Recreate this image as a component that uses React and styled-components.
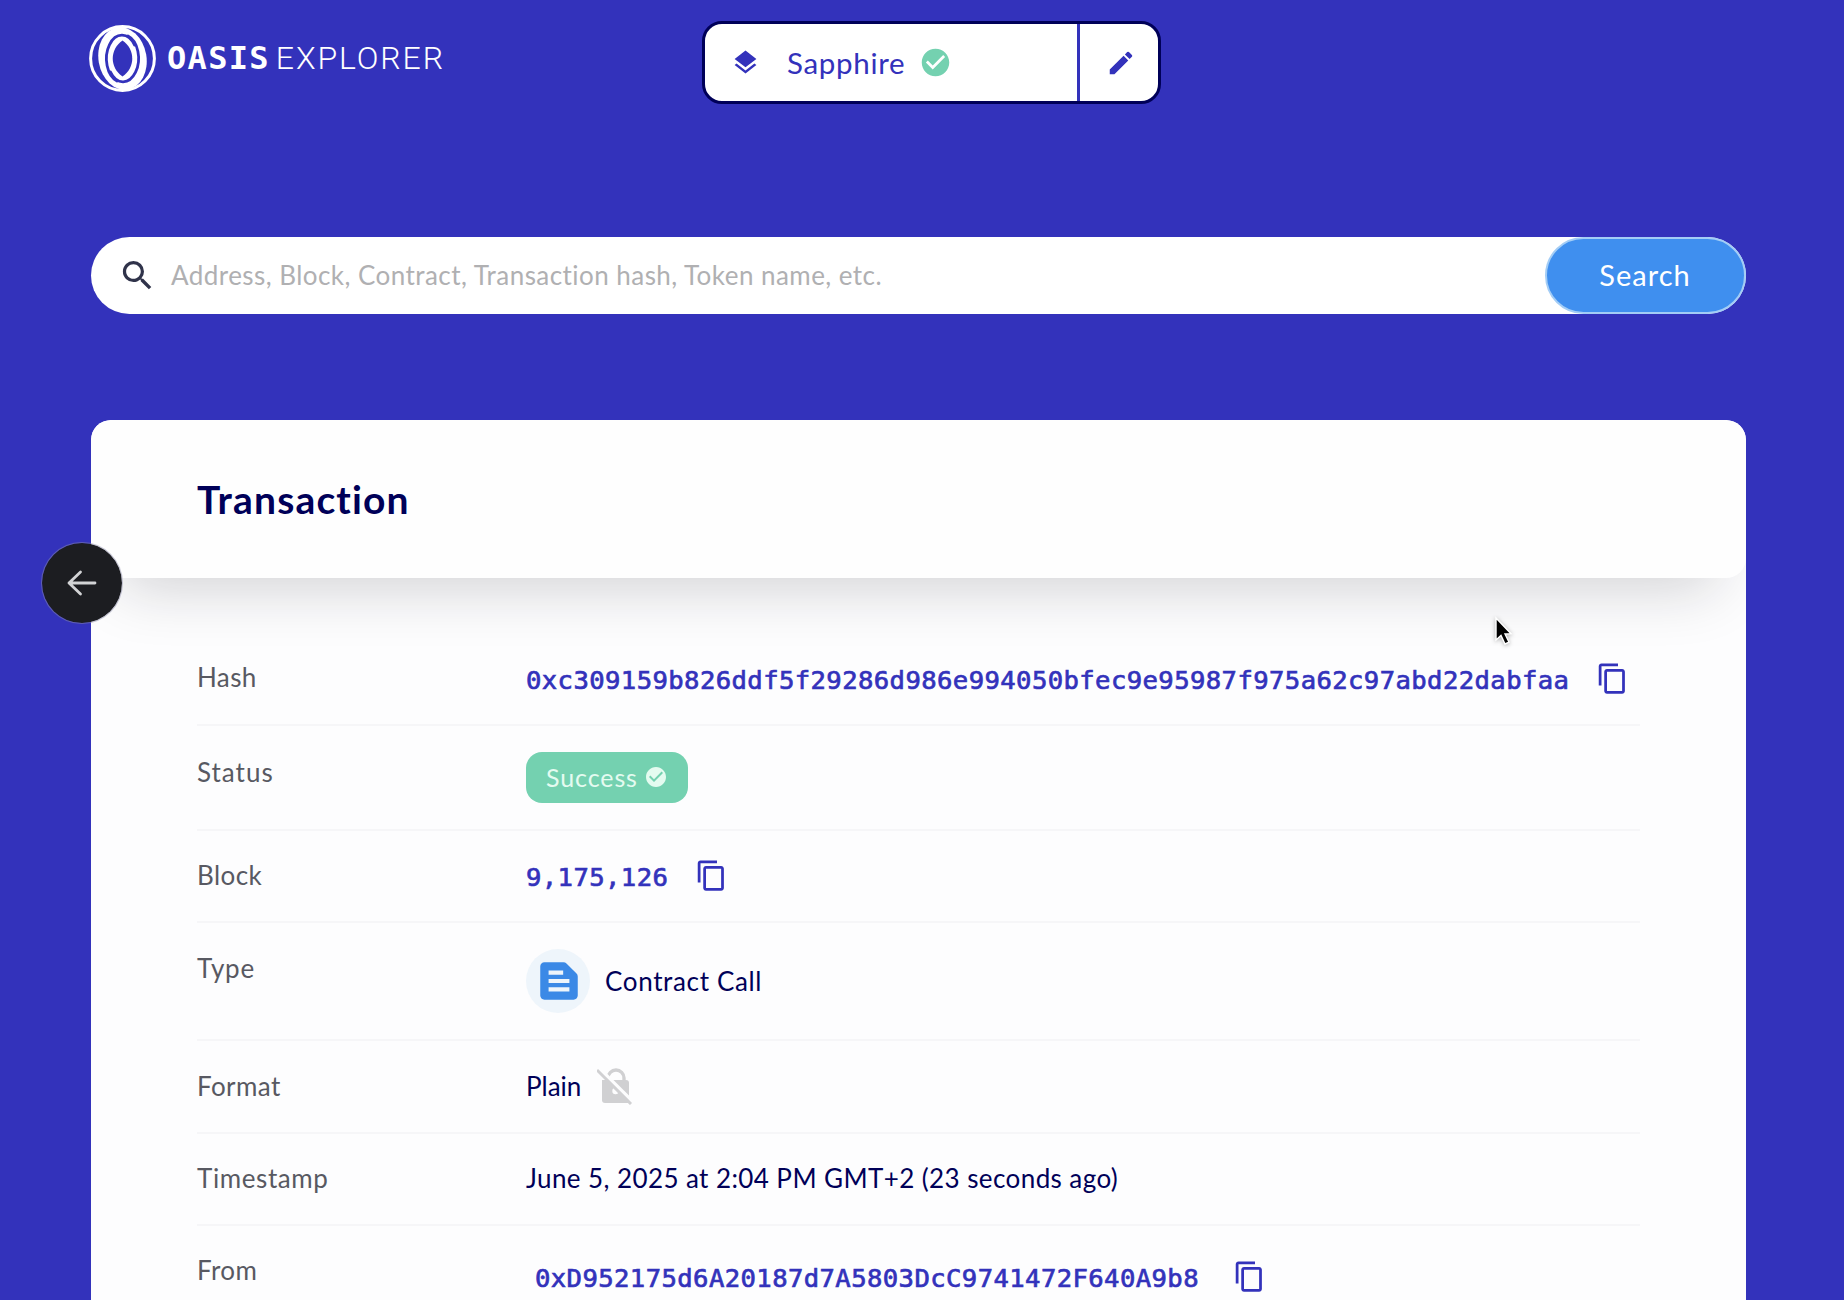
import React from "react";
import styled, { createGlobalStyle } from "styled-components";
import { MdContentCopy, MdLayers, MdEdit, MdCheckCircle, MdSearch, MdTextSnippet } from "react-icons/md";

const brand = "#3332bb";
const navy = "#000058";
const green = "#74d1b0";

const GlobalStyle = createGlobalStyle`
  * { box-sizing: border-box; }
  html, body { margin: 0; background: ${brand}; overflow: hidden; }
  body { font-family: Lato, "Liberation Sans", sans-serif; }
`;

const Page = styled.div`
  position: relative;
  width: 1844px;
  height: 1300px;
  overflow: hidden;
  background: ${brand};
  display: flex;
  flex-direction: column;
  padding: 21px 98.5px 0 91px;
`;

const TopBar = styled.header`
  display: grid;
  grid-template-columns: 611px 459px;
  height: 215.5px;
  align-items: start;
`;

const Brand = styled.div`
  display: flex;
  align-items: center;
  height: 74px;
  margin-left: -2px;
  color: #fff;
`;

const LogoMark = styled.svg`
  width: 67px;
  height: 67px;
  margin-right: 11px;
  flex: none;
`;

const BrandStrong = styled.span`
  font: 700 32px/1 "DejaVu Sans Mono", monospace;
  letter-spacing: 1.3px;
  margin-right: 6px;
`;

const BrandLight = styled.span`
  font: 300 32px/1 Roboto, sans-serif;
  letter-spacing: 1.9px;
`;

const NetworkPicker = styled.div`
  display: flex;
  height: 83px;
  border: 3px solid ${navy};
  border-radius: 20px;
  background: #fff;
  color: ${brand};
  overflow: hidden;
`;

const NetworkName = styled.div`
  flex: 1;
  display: flex;
  align-items: center;
  padding-left: 26px;
  font-size: 29.5px;
`;

const NetworkLabel = styled.span`
  margin: -1px 14px 0 27px;
  letter-spacing: 0.7px;
`;

const EditButton = styled.button`
  width: 81px;
  border: 0;
  border-left: 3px solid ${brand};
  background: none;
  color: ${brand};
  display: flex;
  align-items: center;
  justify-content: center;
  padding: 0 0 0 3px;
`;

const SearchBar = styled.div`
  display: flex;
  align-items: center;
  flex: none;
  height: 77.5px;
  border-radius: 39px;
  background: #fff;
  padding-left: 27px;
  color: #30334a;
`;

const Placeholder = styled.span`
  flex: 1;
  margin-left: 14px;
  font-size: 26px;
  letter-spacing: 0.45px;
  color: #b0b0b2;
`;

const SearchButton = styled.button`
  width: 201px;
  height: 77.5px;
  border: 2px solid #a3cdf6;
  border-radius: 39px;
  background: #3f8fef;
  color: #fff;
  font: 400 29px Lato, sans-serif;
  letter-spacing: 1px;
  padding: 0 0 2px;
`;

const Card = styled.main`
  margin-top: 105.5px;
  flex: 1;
  min-height: 0;
  border-radius: 20px 20px 0 0;
  background: #fdfdfe;
  overflow: hidden;
`;

const CardHeader = styled.div`
  height: 158.5px;
  border-radius: 20px;
  background: #fefefe;
  box-shadow: 0 40px 60px -30px rgba(20, 20, 30, 0.19);
  padding: 0 106px;
  display: flex;
  align-items: center;
`;

const Title = styled.h1`
  margin: 0;
  font-size: 39px;
  line-height: 48px;
  font-weight: 700;
  letter-spacing: 1.15px;
  color: ${navy};
`;

const Details = styled.dl`
  margin: 55px 106px 0;
`;

const Row = styled.div`
  display: grid;
  grid-template-columns: 329px 1fr;
  height: ${(p) => p.$height}px;
  border-bottom: 2px solid #f6f6f8;
`;

const Label = styled.dt`
  padding-top: ${(p) => p.$top || 28}px;
  font-size: 26px;
  line-height: 32px;
  letter-spacing: ${(p) => p.$spacing || 0.4}px;
  color: #585962;
`;

const Value = styled.dd`
  margin: 0;
  display: flex;
  align-items: center;
  align-self: start;
  height: 60px;
  margin-top: ${(p) => p.$top}px;
  font-size: 26px;
  letter-spacing: ${(p) => p.$spacing || 0}px;
  color: ${navy};
  white-space: nowrap;
`;

const Mono = styled.span`
  font: 400 25.6px/32px "DejaVu Sans Mono", monospace;
  -webkit-text-stroke: 0.7px ${brand};
  letter-spacing: 0.4px;
  color: ${brand};
  margin: 3px 0 0 ${(p) => p.$indent || 0}px;
`;

const CopyIcon = styled(MdContentCopy)`
  color: ${brand};
  margin-left: ${(p) => p.$gap || 27}px;
  flex: none;
`;

const Pill = styled.span`
  display: flex;
  align-items: center;
  gap: 6px;
  width: 162px;
  height: 51px;
  padding: 0 0 2px 20px;
  margin-top: 1px;
  border-radius: 16px;
  background: ${green};
  color: #e4fbf0;
  font-size: 25px;
  letter-spacing: 0.9px;
`;

const TypeBadge = styled.span`
  width: 64px;
  height: 64px;
  border-radius: 50%;
  background: #eef5fb;
  color: #3b89e6;
  display: flex;
  align-items: center;
  justify-content: center;
  margin-right: 15px;
  padding-left: 1px;
`;

const NoLock = styled.svg`
  width: 36px;
  height: 38px;
  margin-left: 16px;
`;

const BackButton = styled.button`
  position: absolute;
  left: 41px;
  top: 542px;
  width: 82px;
  height: 82px;
  border-radius: 50%;
  border: 1px solid rgba(140, 140, 170, 0.5);
  background: #1c1d21;
  background-clip: padding-box;
  padding: 0;
  display: flex;
  align-items: center;
  justify-content: center;
`;

const Pointer = styled.svg`
  position: absolute;
  left: 1493px;
  top: 615px;
  width: 20px;
  height: 32px;
  filter: drop-shadow(0 1px 2px rgba(0, 0, 0, 0.3));
`;

const Swirl = () => (
  <path d="M45.5 20A15.5 23.5 0 1 0 28 56" fill="none" stroke={brand} strokeWidth="2.8" strokeLinecap="round" />
);

const OasisMark = () => (
  <LogoMark viewBox="0 0 67 67">
    <circle cx="33.5" cy="33.5" r="31.9" fill={brand} stroke="#fff" strokeWidth="3" />
    <ellipse cx="33.5" cy="33.5" rx="24" ry="31.5" transform="rotate(-10 33.5 33.5)" fill="#fff" />
    <Swirl />
    <g transform="rotate(180 33.5 33.5)"><Swirl /></g>
    <path d="M33.5 15.5C46.5 24 46.5 43 33.5 51.5 20.5 43 20.5 24 33.5 15.5Z" fill={brand} />
  </LogoMark>
);

const UnlockedIcon = () => (
  <NoLock viewBox="0 0 36 38">
    <path d="M11 13V11a8 8 0 0 1 16 0v2" fill="none" stroke="#d0d0d2" strokeWidth="3.4" />
    <path d="M5 13H29a3 3 0 0 1 3 3V36H8a3 3 0 0 1-3-3Z" fill="#d0d0d2" />
    <circle cx="18.5" cy="24" r="3.2" fill="#fdfdfe" />
    <path d="M2 1 36 35" stroke="#fdfdfe" strokeWidth="3.4" />
    <path d="M0 3 34 37" stroke="#d0d0d2" strokeWidth="3" />
  </NoLock>
);

const Copy = ({ gap }) => <CopyIcon size={33} $gap={gap} />;

export default function App() {
  return (
    <>
      <GlobalStyle />
      <Page>
        <TopBar>
          <Brand>
            <OasisMark />
            <BrandStrong>OASIS</BrandStrong>
            <BrandLight>EXPLORER</BrandLight>
          </Brand>
          <NetworkPicker>
            <NetworkName>
              <MdLayers size={29} />
              <NetworkLabel>Sapphire</NetworkLabel>
              <MdCheckCircle size={33} color={green} />
            </NetworkName>
            <EditButton aria-label="Edit"><MdEdit size={30} /></EditButton>
          </NetworkPicker>
        </TopBar>
        <SearchBar>
          <MdSearch size={39} />
          <Placeholder>Address, Block, Contract, Transaction hash, Token name, etc.</Placeholder>
          <SearchButton>Search</SearchButton>
        </SearchBar>
        <Card>
          <CardHeader><Title>Transaction</Title></CardHeader>
          <Details>
            <Row $height={93}>
              <Label>Hash</Label>
              <Value $top={15}>
                <Mono>0xc309159b826ddf5f29286d986e994050bfec9e95987f975a62c97abd22dabfaa</Mono>
                <Copy />
              </Value>
            </Row>
            <Row $height={105}>
              <Label $top={30} $spacing={1}>Status</Label>
              <Value $top={21}><Pill>Success<MdCheckCircle size={24} /></Pill></Value>
            </Row>
            <Row $height={92}>
              <Label>Block</Label>
              <Value $top={14}><Mono>9,175,126</Mono><Copy /></Value>
            </Row>
            <Row $height={118}>
              <Label $top={29} $spacing={0.8}>Type</Label>
              <Value $top={28} $spacing={0.65}>
                <TypeBadge><MdTextSnippet size={50} /></TypeBadge>
                Contract Call
              </Value>
            </Row>
            <Row $height={93}>
              <Label $top={29}>Format</Label>
              <Value $top={15}>Plain<UnlockedIcon /></Value>
            </Row>
            <Row $height={92}>
              <Label $spacing={0.6}>Timestamp</Label>
              <Value $top={14} $spacing={0.41}>June 5, 2025 at 2:04 PM GMT+2 (23 seconds ago)</Value>
            </Row>
            <Row $height={100}>
              <Label>From</Label>
              <Value $top={20}>
                <Mono $indent={9}>0xD952175d6A20187d7A5803DcC9741472F640A9b8</Mono>
                <Copy gap={34} />
              </Value>
            </Row>
          </Details>
        </Card>
        <BackButton aria-label="Back">
          <svg width="32" height="32" viewBox="0 0 32 32" fill="none" stroke="#d2d3d5" strokeWidth="2.8" strokeLinecap="round" strokeLinejoin="round">
            <path d="M29 16H3M14.5 5 3 16l11.5 11" />
          </svg>
        </BackButton>
        <Pointer viewBox="0 0 20 32">
          <path d="M3 3v22l5-4.5 4 8.5 4-1.8-4-8.2 6-.3z" fill="#000" stroke="#fff" strokeWidth="1.4" />
        </Pointer>
      </Page>
    </>
  );
}
